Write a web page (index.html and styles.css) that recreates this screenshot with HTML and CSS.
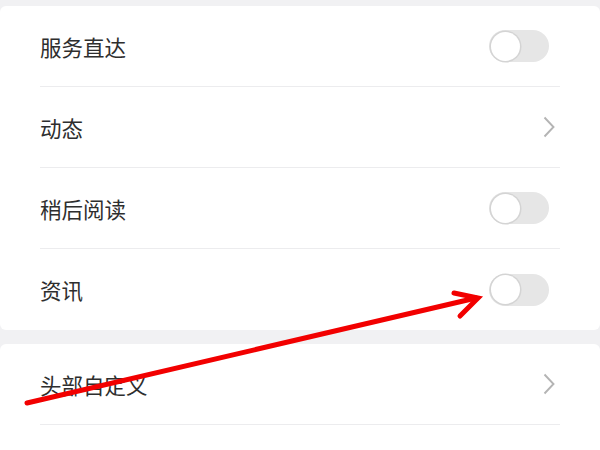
FILE: index.html
```html
<!DOCTYPE html>
<html lang="zh-CN">
  <head>
    <meta charset="UTF-8" />
    <meta name="viewport" content="width=device-width, initial-scale=1.0" />
    <title>设置</title>
    <link rel="stylesheet" href="styles.css">
  </head>
  <body>
    <div class="page">
      <div class="card">
        <div class="row">
          <span class="label">服务直达</span>
          <span class="switch"><span class="knob"></span></span>
        </div>
        <div class="row">
          <span class="label">动态</span>
          <svg class="chevron" viewBox="0 0 12 22" width="12" height="22">
            <path d="M1.5 1.5 L10.5 11 L1.5 20.5" fill="none" stroke="#b4b4b4" stroke-width="1.9" />
          </svg>
        </div>
        <div class="row">
          <span class="label">稍后阅读</span>
          <span class="switch"><span class="knob"></span></span>
        </div>
        <div class="row">
          <span class="label">资讯</span>
          <span class="switch"><span class="knob"></span></span>
        </div>
      </div>

      <div class="card">
        <div class="row">
          <span class="label">头部自定义</span>
          <svg class="chevron" viewBox="0 0 12 22" width="12" height="22">
            <path d="M1.5 1.5 L10.5 11 L1.5 20.5" fill="none" stroke="#b4b4b4" stroke-width="1.9" />
          </svg>
        </div>
        <div class="row"></div>
      </div>
    </div>

    <!-- 标注箭头 -->
    <svg class="annotation" viewBox="0 0 600 450" width="600" height="450">
      <g stroke="#f20000" stroke-width="5" stroke-linecap="round" fill="none">
        <path d="M27 403 L476 298" />
        <path d="M454 293 L478 298 L460 316" stroke-linejoin="miter" />
      </g>
    </svg>
  </body>
</html>
```

FILE: styles.css
```css
:root {
  --page-bg: #f1f1f3;
  --card-bg: #ffffff;
  --text-color: #2e2e2e;
  --divider: #ececee;
  --switch-track: #e6e6e6;
}

body {
  margin: 0;
  background-color: var(--page-bg);
  font-family: "Noto Sans CJK SC", "Noto Sans", sans-serif;
  color: var(--text-color);
  overflow: hidden;
}

.page {
  padding-top: 6px;
  display: flex;
  flex-direction: column;
  gap: 14px;
}

.card {
  background-color: var(--card-bg);
  border-radius: 6px;
  padding: 0 40px;
}

.row {
  height: 81px;
  display: flex;
  align-items: center;
  justify-content: space-between;
  border-bottom: 1px solid var(--divider);
  box-sizing: border-box;
}

.card .row:last-child {
  border-bottom: none;
}

.label {
  font-size: 21.5px;
}

.switch {
  width: 60px;
  height: 32px;
  margin-right: 11px;
  border-radius: 16px;
  background-color: var(--switch-track);
  display: flex;
  align-items: center;
}

.knob {
  width: 29px;
  height: 29px;
  margin-left: 1.5px;
  border-radius: 50%;
  background-color: #ffffff;
  box-shadow: 0 0 0 1.5px #d4d4d4;
}

.chevron {
  margin-right: 5px;
}

.annotation {
  position: absolute;
  left: 0;
  top: 0;
  pointer-events: none;
}
```
